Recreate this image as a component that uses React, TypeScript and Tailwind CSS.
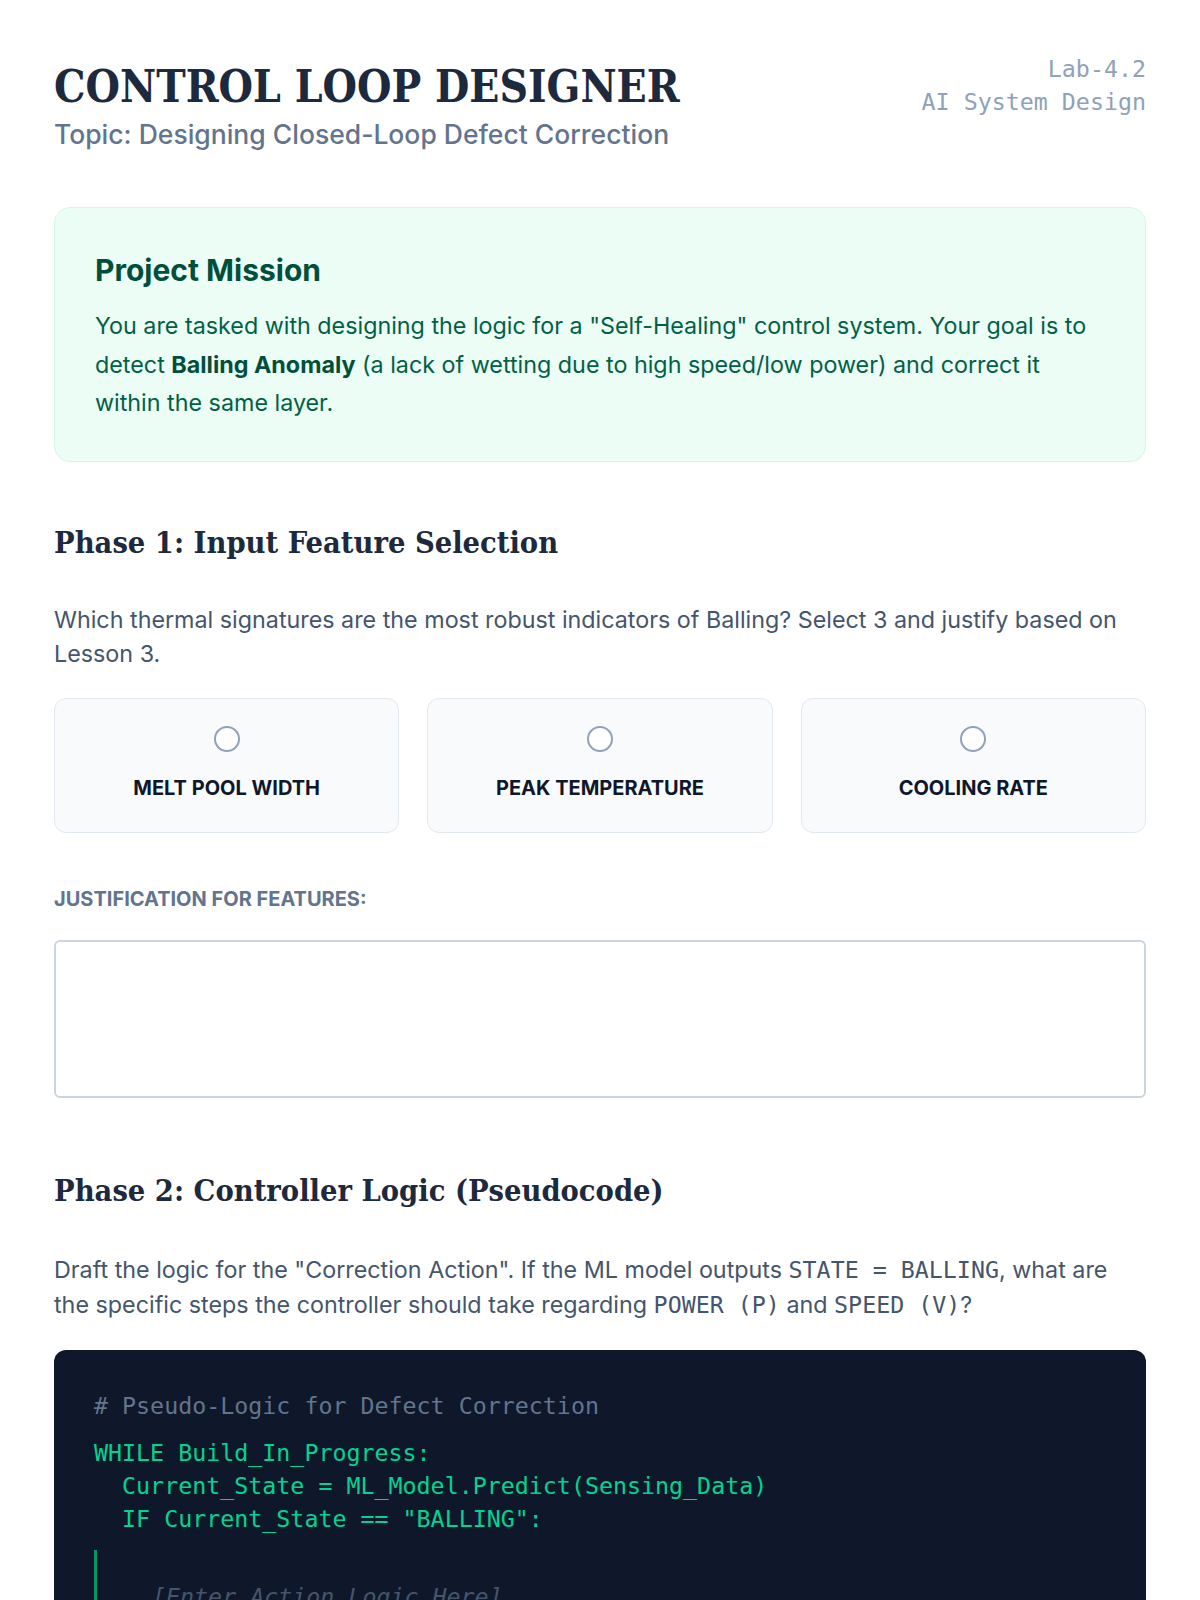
import React, { useState } from 'react';

const features = ['Melt Pool Width', 'Peak Temperature', 'Cooling Rate'];

const slab = "font-['Roboto_Slab','DejaVu_Serif_Condensed','DejaVu_Serif',serif]";
const mono = "font-['DejaVu_Sans_Mono','Liberation_Mono',monospace]";

const FeatureCard: React.FC<{ label: string; checked: boolean; onToggle: () => void }> = ({ label, checked, onToggle }) => (
    <button
        type="button"
        onClick={onToggle}
        className="flex h-[135px] flex-col items-center rounded-xl border border-slate-200 bg-slate-50 pt-[27px]"
    >
        <span className={`h-[26px] w-[26px] rounded-full border-2 ${checked ? 'border-emerald-500 bg-emerald-500' : 'border-slate-400 bg-white'}`} />
        <span className="mt-[22px] text-[20px] font-bold uppercase leading-[28px] text-slate-900">{label}</span>
    </button>
);

const App: React.FC = () => {
    const [selected, setSelected] = useState<string[]>([]);
    const [justification, setJustification] = useState('');
    const [action, setAction] = useState('');

    const toggle = (f: string) => {
        setSelected(prev => (prev.includes(f) ? prev.filter(x => x !== f) : [...prev, f]));
    };

    return (
        <div className="min-h-screen bg-white font-['Inter',sans-serif]">
            <div className="px-[54px] pt-[52px] pb-20">
                {/* header */}
                <header className="flex items-start justify-between">
                    <div className="mt-[6px]">
                        <h1 className={`${slab} text-[44px] font-bold leading-[58px] text-slate-800`}>CONTROL LOOP DESIGNER</h1>
                        <p className="mt-[1px] text-[26.5px] font-medium leading-[34px] text-slate-500">
                            Topic: Designing Closed-Loop Defect Correction
                        </p>
                    </div>
                    <div className={`${mono} text-right text-[23.3px] leading-[33px] text-slate-400`}>
                        <div>Lab-4.2</div>
                        <div>AI System Design</div>
                    </div>
                </header>

                {/* mission */}
                <section className="mt-[56px] rounded-2xl border border-emerald-100 bg-emerald-50 px-10 pt-[43px] pb-[38px]">
                    <h2 className="text-[30px] font-bold leading-[38px] text-emerald-900">Project Mission</h2>
                    <p className="mt-[18px] text-[23.3px] leading-[38.6px] text-emerald-800">
                        You are tasked with designing the logic for a "Self-Healing" control system. Your goal is to detect{' '}
                        <strong className="font-bold text-emerald-900">Balling Anomaly</strong> (a lack of wetting due to high
                        speed/low power) and correct it within the same layer.
                    </p>
                </section>

                {/* phase 1 */}
                <h2 className={`${slab} mt-[60px] text-[30.5px] font-semibold leading-[40px] text-slate-800`}>
                    Phase 1: Input Feature Selection
                </h2>
                <p className="mt-[41px] text-[23.3px] leading-[34px] text-slate-600">
                    Which thermal signatures are the most robust indicators of Balling? Select 3 and justify based on Lesson 3.
                </p>
                <div className="mt-[27px] grid grid-cols-3 gap-[28px]">
                    {features.map(f => (
                        <FeatureCard key={f} label={f} checked={selected.includes(f)} onToggle={() => toggle(f)} />
                    ))}
                </div>

                <label className="mt-[53px] block text-[20px] font-bold uppercase leading-[27px] text-slate-500">
                    Justification for features:
                </label>
                <textarea
                    value={justification}
                    onChange={e => setJustification(e.target.value)}
                    className="mt-[27px] block h-[158px] w-full resize-none rounded-md border-2 border-slate-300 bg-white p-4 text-[20px] text-slate-700 outline-none"
                />

                {/* phase 2 */}
                <h2 className={`${slab} mt-[72px] text-[30.5px] font-semibold leading-[40px] text-slate-800`}>
                    Phase 2: Controller Logic (Pseudocode)
                </h2>
                <p className="mt-[42px] text-[23.3px] leading-[35px] text-slate-600">
                    Draft the logic for the "Correction Action". If the ML model outputs{' '}
                    <code className={`${mono} text-[23.3px]`}>STATE = BALLING</code>, what are the specific steps the controller
                    should take regarding <code className={`${mono} text-[23.3px]`}>POWER (P)</code> and{' '}
                    <code className={`${mono} text-[23.3px]`}>SPEED (V)</code>?
                </p>

                <div className={`${mono} mt-[28px] rounded-xl bg-slate-900 px-10 pt-[39px] pb-10 text-[23.3px] leading-[33px] text-emerald-400`}>
                    <div className="text-slate-500"># Pseudo-Logic for Defect Correction</div>
                    <div className="mt-[14px] whitespace-pre">WHILE Build_In_Progress:</div>
                    <div className="whitespace-pre">{'  Current_State = ML_Model.Predict(Sensing_Data)'}</div>
                    <div className="whitespace-pre">{'  IF Current_State == "BALLING":'}</div>
                    <textarea
                        value={action}
                        onChange={e => setAction(e.target.value)}
                        placeholder="[Enter Action Logic Here]"
                        className="mt-[15px] block h-[180px] w-full resize-none border-l-[3px] border-emerald-600 bg-transparent pl-[55px] pt-[30px] italic text-emerald-300 outline-none placeholder:text-slate-600"
                    />
                    <div className="mt-4 whitespace-pre">{'  ELSE:'}</div>
                    <div className="whitespace-pre">{'    Maintain_Current_Parameters()'}</div>
                </div>
            </div>
        </div>
    );
};

export default App;
